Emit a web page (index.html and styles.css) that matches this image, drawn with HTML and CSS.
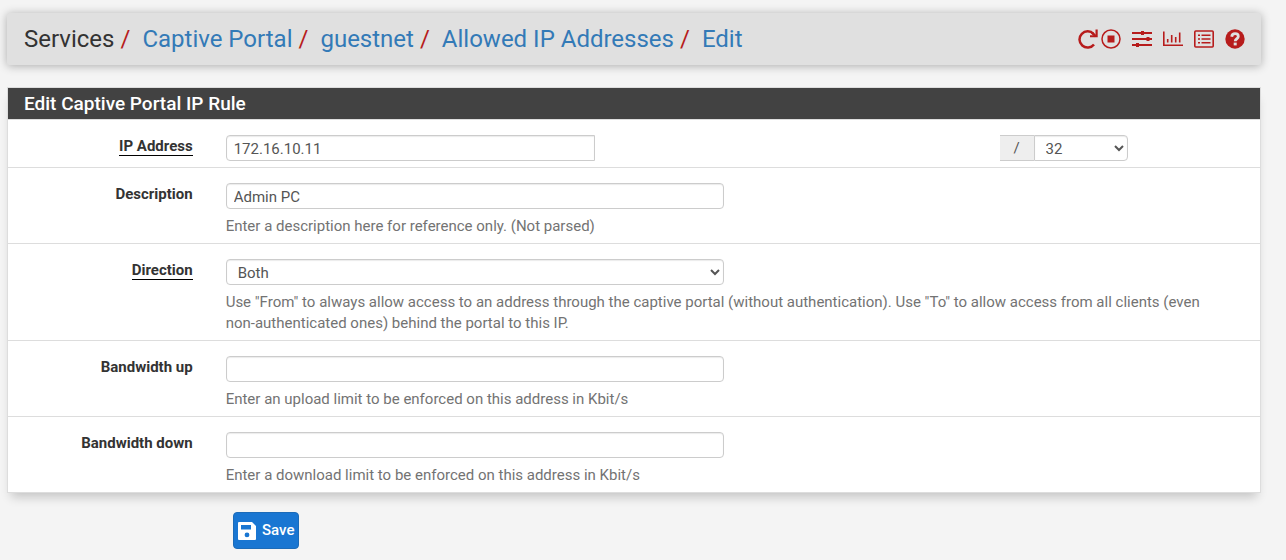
FILE: index.html
```html
<!DOCTYPE html>
<html lang="en">
<head>
    <meta charset="UTF-8">
    <meta name="viewport" content="width=device-width, initial-scale=1.0">
    <title>Services: Captive Portal: guestnet: Allowed IP Addresses: Edit</title>
    <link rel="stylesheet" href="styles.css">
</head>
<body>
    <header class="header">
        <nav>
            <ol class="breadcrumb">
                <li>Services</li>
                <li><a href="#">Captive Portal</a></li>
                <li><a href="#">guestnet</a></li>
                <li><a href="#">Allowed IP Addresses</a></li>
                <li><a href="#">Edit</a></li>
            </ol>
        </nav>
        <div class="context-links">
            <a href="#" aria-label="Restart service">
                <svg class="icon" viewBox="0 0 20 20"><path d="M16 15.4A8.1 8.1 0 1 1 15.6 5" fill="none" stroke="currentColor" stroke-width="2.5"/><path d="M19.7 .6V8.3H12V6.2H17.5V.6z" fill="currentColor"/><path d="M14 3.6L17.8 7.4" stroke="currentColor" stroke-width="2.4"/></svg>
            </a>
            <a href="#" aria-label="Stop service" class="stop">
                <svg class="icon" viewBox="0 0 20 20"><circle cx="10" cy="10" r="9" fill="none" stroke="currentColor" stroke-width="1.5"/><rect x="6.5" y="6.5" width="7" height="7" fill="currentColor"/></svg>
            </a>
            <a href="#" aria-label="Settings">
                <svg class="icon" viewBox="0 0 20 20"><path d="M0 4H20M0 10H20M0 16H20" stroke="currentColor" stroke-width="2.2"/><path d="M9 2h3v4h-3zM14.5 8h3v4h-3zM4 14h3v4h-3z" fill="currentColor"/></svg>
            </a>
            <a href="#" aria-label="Monitoring">
                <svg class="icon" viewBox="0 0 20 20"><path d="M.8 2.5V16.2H20" fill="none" stroke="currentColor" stroke-width="1.6"/><path d="M4.7 10V13.5M8.7 6V13.5M12.7 8V13.5M16.7 3.5V13.5" stroke="currentColor" stroke-width="1.6"/></svg>
            </a>
            <a href="#" aria-label="Logs">
                <svg class="icon" viewBox="0 0 20 20"><rect x=".8" y="2" width="18.4" height="16" rx="1" fill="none" stroke="currentColor" stroke-width="1.6"/><path d="M4 6.3H6M4 10H6M4 13.7H6M7.5 6.3H16.5M7.5 10H16.5M7.5 13.7H16.5" stroke="currentColor" stroke-width="1.6"/></svg>
            </a>
            <a href="#" aria-label="Help">
                <svg class="icon" viewBox="0 0 20 20"><circle cx="10" cy="10" r="9.7" fill="currentColor"/><path d="M6.7 7.7C7 5.5 8.3 4.7 10.1 4.7C12 4.7 13.3 5.8 13.3 7.5C13.3 9.9 10.2 9.6 10.2 12.2" fill="none" stroke="#e0e0e0" stroke-width="2.8"/><path d="M8.7 13.6h3v2.8h-3z" fill="#e0e0e0"/></svg>
            </a>
        </div>
    </header>

    <form>
        <section class="panel">
            <h2>Edit Captive Portal IP Rule</h2>
            <div class="form-group">
                <label for="ip"><span class="required">IP Address</span></label>
                <div class="field">
                    <div class="ip-group">
                        <input type="text" class="form-control ip" id="ip" name="ip" value="172.16.10.11" required>
                        <div class="mask">
                            <span class="addon">/</span>
                            <select class="form-control" name="sn" aria-label="Subnet mask">
                                <option>32</option>
                                <option>31</option>
                                <option>30</option>
                                <option>24</option>
                            </select>
                        </div>
                    </div>
                </div>
            </div>
            <div class="form-group">
                <label for="descr">Description</label>
                <div class="field">
                    <input type="text" class="form-control" id="descr" name="descr" value="Admin PC">
                    <p class="help">Enter a description here for reference only. (Not parsed)</p>
                </div>
            </div>
            <div class="form-group">
                <label for="dir"><span class="required">Direction</span></label>
                <div class="field">
                    <select class="form-control" id="dir" name="dir">
                        <option>Both</option>
                        <option>From</option>
                        <option>To</option>
                    </select>
                    <p class="help">Use "From" to always allow access to an address through the captive portal (without authentication). Use "To" to allow access from all clients (even non-authenticated ones) behind the portal to this IP.</p>
                </div>
            </div>
            <div class="form-group">
                <label for="bw_up">Bandwidth up</label>
                <div class="field">
                    <input type="text" class="form-control" id="bw_up" name="bw_up">
                    <p class="help">Enter an upload limit to be enforced on this address in Kbit/s</p>
                </div>
            </div>
            <div class="form-group">
                <label for="bw_down">Bandwidth down</label>
                <div class="field">
                    <input type="text" class="form-control" id="bw_down" name="bw_down">
                    <p class="help">Enter a download limit to be enforced on this address in Kbit/s</p>
                </div>
            </div>
        </section>
        <button type="submit" class="save">
            <svg viewBox="0 0 18 18"><path fill="currentColor" fill-rule="evenodd" d="M1 0H14L18 4V17Q18 18 17 18H1Q0 18 0 17V1Q0 0 1 0zM3 3V7.5H13V3zM9 10.5A2.4 2.4 0 1 0 9 15.3A2.4 2.4 0 1 0 9 10.5z"/></svg>
            Save
        </button>
    </form>
</body>
</html>
```
FILE: styles.css
```css
* {
    box-sizing: border-box;
}

body {
    margin: 0;
    padding: 13px 25px 11px 7px;
    background-color: #f4f4f4;
    color: #333;
    font-family: Roboto, Arial, sans-serif;
    font-size: 15px;
    line-height: 21px;
}

a {
    color: #337ab7;
    text-decoration: none;
}

.header {
    display: flex;
    justify-content: space-between;
    align-items: center;
    padding: 10px 16px 10px 17px;
    margin-bottom: 22px;
    background-color: #e0e0e0;
    border-radius: 2px;
    box-shadow: 0 1px 10px rgba(0, 0, 0, 0.3);
}

.breadcrumb {
    display: flex;
    margin: 0;
    padding: 0;
    list-style: none;
    font-size: 24px;
    line-height: 32px;
    color: #333;
}

.breadcrumb li + li::before {
    content: "/";
    padding: 0 12px 0 6px;
    color: #b71c1c;
}

.context-links {
    display: flex;
    gap: 11px;
}

.context-links a {
    color: #b71c1c;
}

.context-links .stop {
    margin-left: -8px;
}

.icon {
    display: block;
    width: 20px;
    height: 20px;
}

.panel {
    background-color: #fff;
    border: 1px solid #ddd;
    box-shadow: 0 8px 10px -4px rgba(0, 0, 0, 0.2);
}

.panel h2 {
    margin: 0;
    padding: 5px 16px;
    background-color: #424242;
    color: #fff;
    font-size: 19px;
    font-weight: 500;
    line-height: 21px;
}

.form-group {
    display: flex;
    padding: 15px 0 6px;
    border-top: 1px solid #ddd;
}

.form-group label {
    flex: 0 0 16.6667%;
    padding-right: 24px;
    text-align: right;
    font-weight: bold;
    line-height: 23px;
}

.required {
    border-bottom: 1px solid #000;
}

.field {
    flex: 1;
    padding: 0 30px 0 9px;
}

.form-control {
    display: block;
    width: 49.65%;
    height: 26px;
    padding: 1px 7px 0;
    background-color: #fff;
    border: 1px solid #ccc;
    border-radius: 4px;
    box-shadow: inset 0 1px 1px rgba(0, 0, 0, 0.08);
    color: #555;
    font-family: inherit;
    font-size: 15px;
}

.ip-group {
    display: flex;
    justify-content: space-between;
    width: 89.8%;
}

.ip-group .ip {
    width: 41%;
    border-radius: 4px 0 0 4px;
}

.mask {
    display: flex;
}

.addon {
    width: 34px;
    border: 1px solid #ccc;
    border-width: 1px 0;
    background-color: #eee;
    color: #555;
    line-height: 24px;
    text-align: center;
}

.mask .form-control {
    width: 94px;
    border-radius: 0 4px 4px 0;
}

.help {
    margin: 7px 0 0;
    color: #737373;
}

.save {
    display: flex;
    align-items: center;
    gap: 6px;
    margin: 19px 0 0 226px;
    padding: 7px 4px;
    background-color: #1976d2;
    border: 1px solid #1c6bb8;
    border-radius: 4px;
    color: #fff;
    font-family: inherit;
    font-size: 15px;
    font-weight: 500;
    line-height: 21px;
}

.save svg {
    width: 18px;
    height: 18px;
}
```
